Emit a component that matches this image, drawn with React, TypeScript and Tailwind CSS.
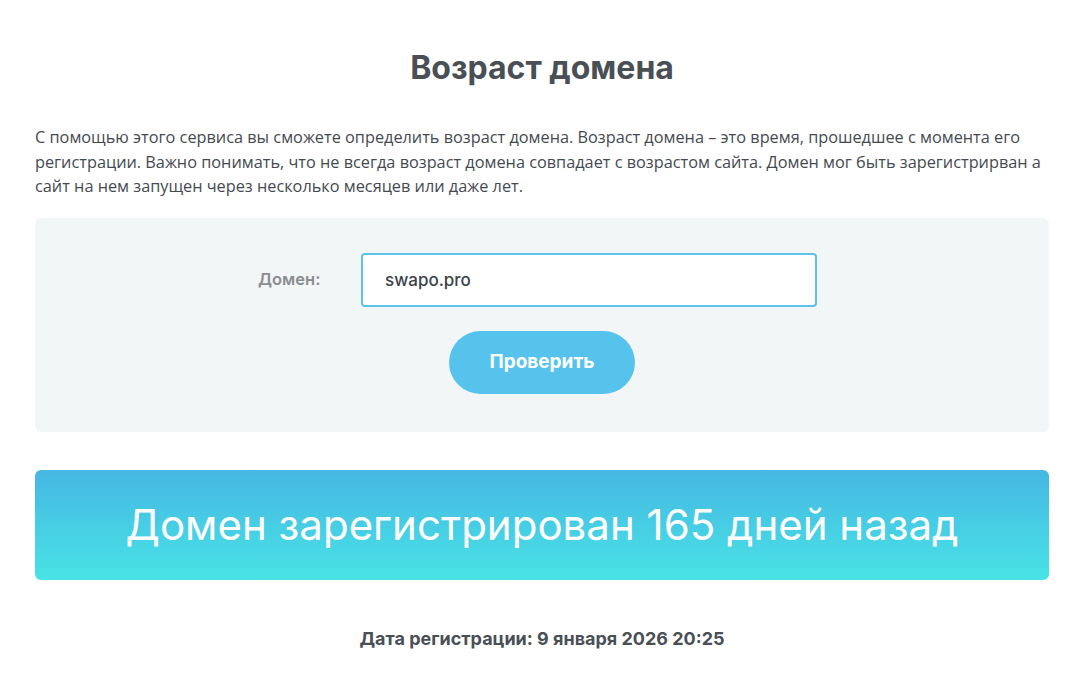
export default function App() {
  return (
    <div className="min-h-screen bg-white font-['Open_Sans','Noto_Sans',sans-serif] text-[#454a50]">
      <main className="ml-[35px] w-[1014px] pt-[47px]">
        <h1 className="text-center font-['Inter',sans-serif] text-[32px] font-bold leading-[42px] text-[#4a4f56]">
          Возраст домена
        </h1>

        <p className="mt-[36px] text-[16.3px] font-medium leading-[24.5px]">
          С помощью этого сервиса вы сможете определить возраст домена. Возраст домена – это время, прошедшее с момента его
          регистрации. Важно понимать, что не всегда возраст домена совпадает с возрастом сайта. Домен мог быть зарегистрирван а
          сайт на нем запущен через несколько месяцев или даже лет.
        </p>

        <section className="mt-[19px] flex flex-col items-center rounded-[6px] bg-[#f3f6f7] pt-[35px] pb-[38px]">
          <div className="flex items-center pr-[9px]">
            <label className="w-[103px] font-['Inter',sans-serif] text-[16.5px] font-semibold text-[#8a8d90]">
              Домен:
            </label>
            <input
              defaultValue="swapo.pro"
              className="h-[54px] w-[456px] rounded-[4px] border-2 border-[#5ec1e8] bg-white px-[22px] font-['Inter',sans-serif] text-[17px] font-medium text-[#3d4248] outline-none"
            />
          </div>
          <button className="mt-[24px] h-[63px] w-[186px] rounded-full bg-[#56c3ed] font-['Inter',sans-serif] text-[19px] font-bold text-white">
            Проверить
          </button>
        </section>

        <div className="mt-[38px] flex h-[110px] items-center justify-center rounded-[6px] bg-gradient-to-b from-[#46b7e3] to-[#48e3e5]">
          <span className="font-['Inter',sans-serif] text-[42px] font-normal text-white">
            Домен зарегистрирован 165 дней назад
          </span>
        </div>

        <p className="mt-[45px] text-center font-['Inter',sans-serif] text-[18px] font-bold text-[#4a4f56]">
          Дата регистрации: 9 января 2026 20:25
        </p>
      </main>
    </div>
  );
}
